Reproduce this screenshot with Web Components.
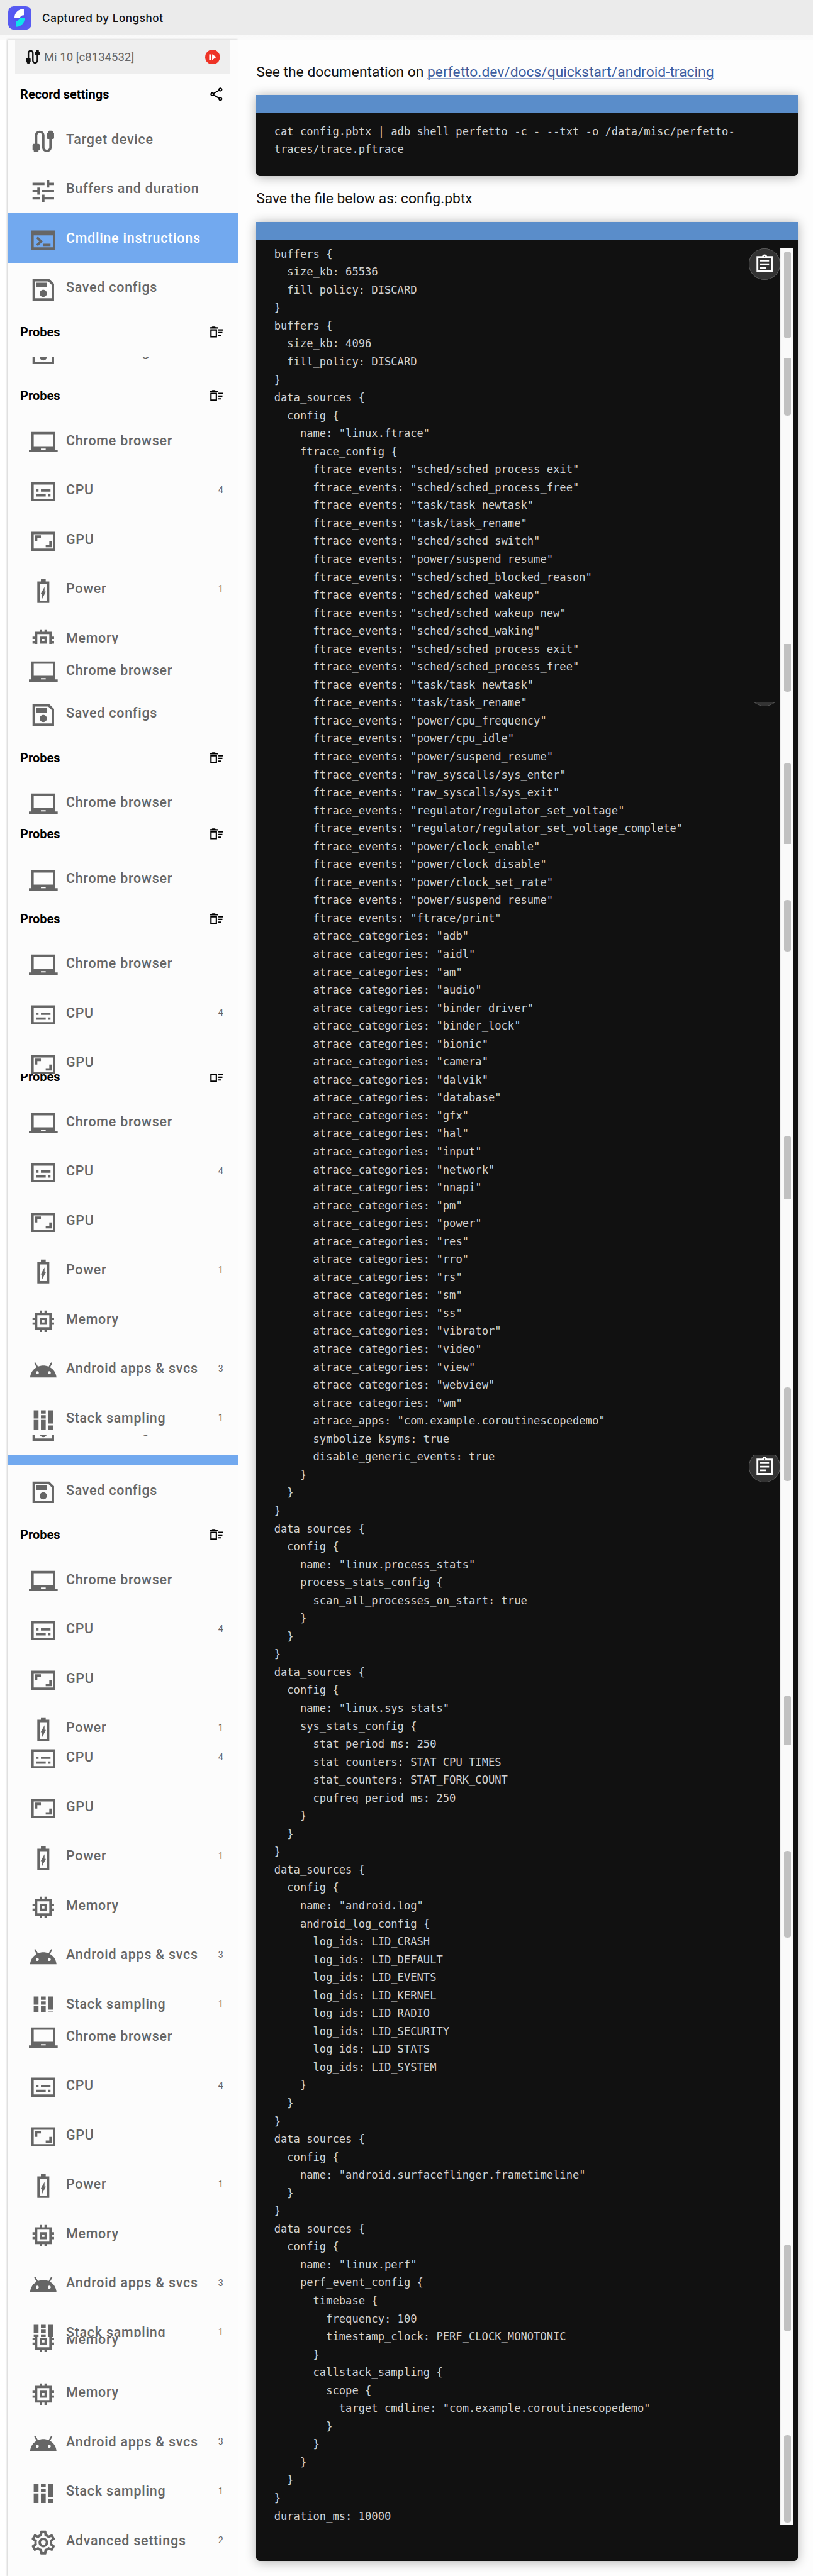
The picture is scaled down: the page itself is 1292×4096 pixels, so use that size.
<!doctype html>
<html><head><meta charset="utf-8">
<style>html,body{margin:0;padding:0;background:#fff;overflow:hidden}</style>
</head><body>
<shot-app></shot-app>
<script>
const P={
cable:'M20 5V4c0-.55-.45-1-1-1h-2c-.55 0-1 .45-1 1v1h-1v4c0 .55.45 1 1 1h1v7c0 1.1-.9 2-2 2s-2-.9-2-2V7c0-2.21-1.79-4-4-4S5 4.79 5 7v7H4c-.55 0-1 .45-1 1v4h1v1c0 .55.45 1 1 1h2c.55 0 1-.45 1-1v-1h1v-4c0-.55-.45-1-1-1H7V7c0-1.1.9-2 2-2s2 .9 2 2v10c0 2.21 1.79 4 4 4s4-1.79 4-4v-7h1c.55 0 1-.45 1-1V5h-1z',
tune:'M3 17v2h6v-2H3zM3 5v2h10V5H3zm10 16v-2h8v-2h-8v-2h-2v6h2zM7 9v2H3v2h4v2h2V9H7zm14 4v-2H11v2h10zm-6-4h2V7h4V5h-4V3h-2v6z',
terminal:'M22 4H2v16h20V4zm-2 14H4V8h16v10zm-2-1h-6v-2h6v2zM7.5 17l-1.41-1.41L8.67 13l-2.59-2.59L7.5 9l4 4-4 4z',
save:'M17 3H3v18h18V7l-4-4zm2 16H5V5h11.17L19 7.83V19zm-7-7c-1.66 0-3 1.34-3 3s1.34 3 3 3 3-1.34 3-3-1.34-3-3-3zM6 6h9v4H6V6z',
laptop:'M22 18V3H2v15H0v2h24v-2h-2zm-8 0h-4v-1h4v1zm6-3H4V5h16v10z',
subtitles:'M22 4H2v16h20V4zm-2 14H4V6h16v12zM6 10h2v2H6zm0 4h8v2H6zm10 0h2v2h-2zm-6-4h8v2h-8z',
aspect:'M19 12h-2v3h-3v2h5v-5zM7 9h3V7H5v5h2V9zM22 4H2v16h20V4zm-2 14H4V6h16v12z',
battery:'M17 4h-3V2h-4v2H7v18h10V4zm-2 16H9V6h6v14zM11 18.5v-4H9.8L13 8.5v4h1.2z',
memory:'M15 9H9v6h6V9zm-2 4h-2v-2h2v2zm8-2V9h-2V5h-4V3h-2v2h-2V3H9v2H5v4H3v2h2v2H3v2h2v4h4v2h2v-2h2v2h2v-2h4v-4h2v-2h-2v-2h2zm-4 6H7V7h10v10z',
android:'M17.6 9.48l1.84-3.18c.16-.31.04-.69-.26-.85-.29-.15-.65-.06-.83.22l-1.88 3.24c-2.86-1.21-6.08-1.21-8.94 0L5.65 5.67c-.19-.29-.58-.38-.87-.2-.28.18-.37.54-.22.83L6.4 9.48C3.3 11.25 1.28 14.44 1 18h22c-.28-3.56-2.3-6.75-5.4-8.52zM7 15.25c-.69 0-1.25-.56-1.25-1.25s.56-1.25 1.25-1.25 1.25.56 1.25 1.25-.56 1.25-1.25 1.25zm10 0c-.69 0-1.25-.56-1.25-1.25s.56-1.25 1.25-1.25 1.25.56 1.25 1.25-.56 1.25-1.25 1.25z',
stack:'M4 4h4v6.8H4zM4 12h4v8H4zM10 4h4v2.7h-4zM10 8h4v2.8h-4zM10 12h4v8h-4zM16 4h4v11h-4zM16 16.6h4V20h-4z',
gear:'M19.43 12.98c.04-.32.07-.64.07-.98 0-.34-.03-.66-.07-.98l2.11-1.65c.19-.15.24-.42.12-.64l-2-3.46c-.09-.16-.26-.25-.44-.25-.06 0-.12.01-.17.03l-2.49 1c-.52-.4-1.08-.73-1.69-.98l-.38-2.65C14.46 2.18 14.25 2 14 2h-4c-.25 0-.46.18-.49.42l-.38 2.65c-.61.25-1.17.59-1.69.98l-2.49-1c-.06-.02-.12-.03-.18-.03-.17 0-.34.09-.43.25l-2 3.46c-.13.22-.07.49.12.64l2.11 1.65c-.04.32-.07.65-.07.98 0 .33.03.66.07.98l-2.11 1.65c-.19.15-.24.42-.12.64l2 3.46c.09.16.26.25.44.25.06 0 .12-.01.17-.03l2.49-1c.52.4 1.08.73 1.69.98l.38 2.65c.03.24.24.42.49.42h4c.25 0 .46-.18.49-.42l.38-2.65c.61-.25 1.17-.59 1.69-.98l2.49 1c.06.02.12.03.18.03.17 0 .34-.09.43-.25l2-3.46c.12-.22.07-.49-.12-.64l-2.11-1.65zm-1.98-1.71c.04.31.05.52.05.73 0 .21-.02.43-.05.73l-.14 1.13.89.7 1.08.84-.7 1.21-1.27-.51-1.04-.42-.9.68c-.43.32-.84.56-1.25.73l-1.06.43-.16 1.13-.2 1.35h-1.4l-.19-1.35-.16-1.13-1.06-.43c-.43-.18-.83-.41-1.23-.71l-.91-.7-1.06.43-1.27.51-.7-1.21 1.08-.84.89-.7-.14-1.13c-.03-.31-.05-.54-.05-.74s.02-.43.05-.73l.14-1.13-.89-.7-1.08-.84.7-1.21 1.27.51 1.04.42.9-.68c.43-.32.84-.56 1.25-.73l1.06-.43.16-1.13.2-1.35h1.39l.19 1.35.16 1.13 1.06.43c.43.18.83.41 1.23.71l.91.7 1.06-.43 1.27-.51.7 1.21-1.07.85-.89.7.14 1.13zM12 8c-2.21 0-4 1.79-4 4s1.79 4 4 4 4-1.79 4-4-1.79-4-4-4zm0 6c-1.1 0-2-.9-2-2s.9-2 2-2 2 .9 2 2-.9 2-2 2z',
share:'M18 16.08c-.76 0-1.44.3-1.96.77L8.91 12.7c.05-.23.09-.46.09-.7s-.04-.47-.09-.7l7.05-4.11c.54.5 1.25.81 2.04.81 1.66 0 3-1.34 3-3s-1.34-3-3-3-3 1.34-3 3c0 .24.04.47.09.7L8.04 9.81C7.5 9.31 6.79 9 6 9c-1.66 0-3 1.34-3 3s1.34 3 3 3c.79 0 1.5-.31 2.04-.81l7.12 4.16c-.05.21-.08.43-.08.65 0 1.61 1.31 2.92 2.92 2.92s2.92-1.31 2.92-2.92-1.31-2.92-2.92-2.92zM18 4c.55 0 1 .45 1 1s-.45 1-1 1-1-.45-1-1 .45-1 1-1zM6 13c-.55 0-1-.45-1-1s.45-1 1-1 1 .45 1 1-.45 1-1 1zm12 7.02c-.55 0-1-.45-1-1s.45-1 1-1 1 .45 1 1-.45 1-1 1z',
sweep:'M15 16h4v2h-4zm0-8h7v2h-7zm0 4h6v2h-6zM3 20h10V8H3v12zM5 10h6v8H5v-8zM14 5h-3l-1-1H6L5 5H2v2h12z',
clip:'M7 15h7v2H7zm0-4h10v2H7zm0-4h10v2H7zm12-4h-4.18C14.4 1.84 13.3 1 12 1c-1.3 0-2.4.84-2.82 2H3v18h18V3h-2zm-7-.25c.41 0 .75.34.75.75s-.34.75-.75.75-.75-.34-.75-.75.34-.75.75-.75zM19 19H5V5h14v14z'
};
function def(name,css,html,extra){
  customElements.define(name,class extends HTMLElement{
    constructor(){super();this.attachShadow({mode:'open'});}
    connectedCallback(){
      if(!this.shadowRoot.firstChild)this.shadowRoot.innerHTML='<style>'+css+'</style>'+(typeof html==='function'?html(this):html);
      if(extra&&!this._d){this._d=1;extra(this)}
    }
  });
}
customElements.define('m-icon',class extends HTMLElement{
  connectedCallback(){
    if(this.shadowRoot)return;
    const s=this.attachShadow({mode:'open'});
    s.innerHTML='<style>:host{display:block;flex:none;width:var(--i,64px);height:var(--i,64px)}svg{display:block;width:100%;height:100%;fill:currentColor}</style><svg viewBox="0 0 24 24"><path fill-rule="evenodd" d="'+P[this.getAttribute('name')]+'"/></svg>';
  }
});
def('capture-bar',`:host{display:block;height:88px;background:linear-gradient(#f1f1f1,#fafafa);font-family:Inter,"Liberation Sans",sans-serif}
.b{height:79px;background:#ebebeb;display:flex;align-items:center;padding-left:18px;gap:24px}
svg{display:block;width:52px;height:52px;margin-top:1px}
span{font-size:24px;font-weight:500;color:#111;letter-spacing:.75px}`,
`<div class="b"><svg viewBox="0 0 52 52"><defs><radialGradient id="g" cx=".5" cy=".5" r=".7"><stop offset="0" stop-color="#4f52f0"/><stop offset="1" stop-color="#5a5ef2"/></radialGradient></defs><rect width="52" height="52" rx="12" fill="url(#g)"/><path fill="#fff" d="M35 6V20C30 20 27.500 22 26 26H14C14 14 23 6 35 6Z"/><path fill="#0fe3ec" d="M37 26C37 37 29 46 17 46V33C22 33 25 30 26 26Z"/></svg><span><slot></slot></span></div>`);
def('device-row',`:host{display:flex;align-items:center;height:78px;margin:0 16px;background:#eee;padding:0 23px 0 20px;color:#666;font-size:26px;font-family:Roboto,sans-serif}
m-icon{--i:40px;color:#111;margin-right:5px}span{flex:1}svg{display:block;width:33px;height:33px}`,
`<m-icon name="cable"></m-icon><span><slot></slot></span><svg viewBox="0 0 33 33"><ellipse cx="16.500" cy="16.500" rx="16.500" ry="16.500" fill="#ee3326"/><path fill="#fff" d="M9 10.500h4v12H9zM15.500 10l9.500 6.500-9.500 6.500z"/></svg>`);
def('nav-head',`:host{display:flex;align-items:center;height:89px;padding:0 30px 0 28px;font:700 28px Roboto,sans-serif;color:#000;justify-content:space-between;box-sizing:border-box}
m-icon{--i:36px}`,
h=>`<span><slot></slot></span><m-icon name="${h.getAttribute('icon')}"></m-icon>`);
def('nav-row',`:host{display:flex;align-items:center;height:110px;padding:0 32px 0 48px;box-sizing:border-box;color:#666;font:500 30px Roboto,sans-serif;letter-spacing:1.1px}
:host([active]){background:#72a9ef;color:#fff}
m-icon{margin-top:10px;margin-right:18px;color:#666}
.t{flex:1;white-space:nowrap}.n{font-size:20px;font-weight:400;letter-spacing:0}`,
h=>`<m-icon name="${h.getAttribute('icon')}"></m-icon><span class="t"><slot></slot></span><span class="n">${h.getAttribute('count')||''}</span>`);
def('nav-band',`:host{display:block;background:#72a9ef}`,'');
def('nav-slice',`:host{display:block;overflow:hidden;flex:none}.i{display:block}`,
h=>`<div class="i" style="margin-top:${h.getAttribute('shift')||0}px"><slot></slot></div>`);
def('side-nav',`:host{display:block;width:512px;flex:none;background:#fcfcfc;margin-left:17px;border-right:2px solid #eee;box-shadow:-2px 0 4px rgba(0,0,0,.22)}`,'<slot></slot>');
def('doc-text',`:host{display:block;font:400 32px/40px Roboto,sans-serif;color:#111;margin:31px 0}`,'<slot></slot>');
def('fake-scroll',`:host{display:block;flex:none;width:28px;border-left:2px solid #eee;background:#fafafa;position:relative}
.w{display:flex;flex-direction:column;padding-left:6px}
.t{width:16px;background:#c1c1c1;flex:none}`,
h=>{let y=554,o='';(h.getAttribute('thumbs')||'').split(' ').forEach(t=>{
   const [a,b,r]=t.split(',');const rad={b:'8px/4px',t:'8px 8px 0 0/4px 4px 0 0',e:'0 0 8px 8px/0 0 4px 4px',n:'0'}[r];
   o+=`<div class="t" style="margin-top:${a-y}px;height:${b-a}px;border-radius:${rad}"></div>`;y=+b;});
   return '<div class="w">'+o+'</div>';});
def('copy-btn',`:host{position:absolute;right:39px;width:71px;overflow:hidden;display:block;z-index:1}
.c{width:70px;height:70px;border-radius:50%;background:#333;box-shadow:inset 0 0 0 1px #666;display:flex;align-items:center;justify-content:center;color:#fff}
m-icon{--i:48px}`,
h=>`<div class="c" style="margin-top:${h.getAttribute('shift')||0}px"><m-icon name="clip"></m-icon></div>`);
def('code-block',`:host{display:block;position:relative;background:#111;border-radius:0 0 8px 8px;box-shadow:0 2px 24px rgba(0,0,0,.3)}
.h{height:40px;background:#5a8dca}
.m{display:flex;justify-content:space-between;align-items:flex-start}
.p{font:400 24px/40px "DejaVu Sans Mono","Liberation Mono",monospace;color:#d2d2d2;white-space:pre-wrap;padding:var(--pt,21px) 80px var(--pb,39px) 40px;flex:1;min-width:0}
::slotted([slot=bar]){margin:20px 10px 0 0}`,
`<div class="h"></div><div class="m"><div class="p"><slot></slot></div><slot name="bar"></slot></div><slot name="over"></slot>`);
def('main-pane',`:host{display:block;flex:1;min-width:0;padding:22px 33px 0 40px;background:#fdfdfd;height:5651px}`,'<slot></slot>');
def('shot-app',`:host{display:block;width:1810px;height:5738px;overflow:hidden;zoom:.71381;background:#fff}
.body{display:flex;align-items:stretch;height:5651px}`,
`<capture-bar>Captured by Longshot</capture-bar><div class="body"><side-nav id="n"></side-nav><main-pane id="m"></main-pane></div>`,
h=>{
  const R={chrome:['laptop','Chrome browser',''],cpu:['subtitles','CPU','4'],gpu:['aspect','GPU',''],power:['battery','Power','1'],mem:['memory','Memory',''],and:['android','Android apps &amp; svcs','3'],stk:['stack','Stack sampling','1'],adv:['gear','Advanced settings','2'],tgt:['cable','Target device',''],buf:['tune','Buffers and duration',''],cmd:['terminal','Cmdline instructions',''],sav:['save','Saved configs','']};
  const item=k=>{
    if(k==='probes')return '<nav-head icon="sweep">Probes</nav-head>';
    if(k==='rec')return '<nav-head icon="share">Record settings</nav-head>';
    if(k==='dev')return '<device-row>Mi 10 [c8134532]</device-row>';
    if(k==='band')return '<nav-band style="height:23px"></nav-band>';
    const r=R[k];return `<nav-row icon="${r[0]}"${r[2]?` count="${r[2]}"`:''}${k==='cmd'?' active':''}>${r[1]}</nav-row>`;};
  const S=[
   [88,795,0,'dev rec tgt buf cmd sav probes'],
   [795,1435,-68,'sav probes chrome cpu gpu power mem'],
   [1435,1530,3,'chrome'],
   [1530,1815,3,'sav probes chrome'],
   [1815,2000,-2,'probes chrome'],
   [2000,2391,2,'probes chrome cpu gpu'],
   [2391,3195,-37,'probes chrome cpu gpu power mem and stk'],
   [3195,3241,-69,'sav'],
   [3241,3881,0,'band sav probes chrome cpu gpu power'],
   [3881,4482,-22,'cpu gpu power mem and stk'],
   [4482,5206,-2,'chrome cpu gpu power mem and stk'],
   [5206,5270,-50,'mem'],
   [5270,5739,4,'mem and stk adv']
  ];
  h.shadowRoot.getElementById('n').innerHTML=S.map(s=>`<nav-slice shift="${s[2]}" style="height:${s[1]-s[0]}px">${s[3].split(' ').map(item).join('')}</nav-slice>`).join('');
  const f=l=>`      ftrace_events: "${l}"`, a=l=>`      atrace_categories: "${l}"`;
  const code=['buffers {','  size_kb: 65536','  fill_policy: DISCARD','}','buffers {','  size_kb: 4096','  fill_policy: DISCARD','}','data_sources {','  config {','    name: "linux.ftrace"','    ftrace_config {',
  ...'sched/sched_process_exit sched/sched_process_free task/task_newtask task/task_rename sched/sched_switch power/suspend_resume sched/sched_blocked_reason sched/sched_wakeup sched/sched_wakeup_new sched/sched_waking sched/sched_process_exit sched/sched_process_free task/task_newtask task/task_rename power/cpu_frequency power/cpu_idle power/suspend_resume raw_syscalls/sys_enter raw_syscalls/sys_exit regulator/regulator_set_voltage regulator/regulator_set_voltage_complete power/clock_enable power/clock_disable power/clock_set_rate power/suspend_resume ftrace/print'.split(' ').map(f),
  ...'adb aidl am audio binder_driver binder_lock bionic camera dalvik database gfx hal input network nnapi pm power res rro rs sm ss vibrator video view webview wm'.split(' ').map(a),
  '      atrace_apps: "com.example.coroutinescopedemo"','      symbolize_ksyms: true','      disable_generic_events: true','    }','  }','}',
  'data_sources {','  config {','    name: "linux.process_stats"','    process_stats_config {','      scan_all_processes_on_start: true','    }','  }','}',
  'data_sources {','  config {','    name: "linux.sys_stats"','    sys_stats_config {','      stat_period_ms: 250','      stat_counters: STAT_CPU_TIMES','      stat_counters: STAT_FORK_COUNT','      cpufreq_period_ms: 250','    }','  }','}',
  'data_sources {','  config {','    name: "android.log"','    android_log_config {',...'CRASH DEFAULT EVENTS KERNEL RADIO SECURITY STATS SYSTEM'.split(' ').map(x=>'      log_ids: LID_'+x),'    }','  }','}',
  'data_sources {','  config {','    name: "android.surfaceflinger.frametimeline"','  }','}',
  'data_sources {','  config {','    name: "linux.perf"','    perf_event_config {','      timebase {','        frequency: 100','        timestamp_clock: PERF_CLOCK_MONOTONIC','      }','      callstack_sampling {','        scope {','          target_cmdline: "com.example.coroutinescopedemo"','        }','      }','    }','  }','}','duration_ms: 10000'].join('\n');
  h.shadowRoot.getElementById('m').innerHTML=`
  <doc-text>See the documentation on <a href="#" style="color:#3d5c9f;text-decoration:underline;text-decoration-color:#95a6cd;text-decoration-thickness:2px;text-underline-offset:3px">perfetto.dev/docs/quickstart/android-tracing</a></doc-text>
  <code-block>cat config.pbtx | adb shell perfetto -c - --txt -o /data/misc/perfetto-traces/trace.pftrace</code-block>
  <doc-text>Save the file below as: config.pbtx</doc-text>
  <code-block style="--pt:12px;--pb:78px;height:5210px"><fake-scroll slot="bar" style="height:5071px" thumbs="561,754,b 798,926,e 1435,1541,e 1700,1880,t 2005,2120,b 2530,2670,t 3090,3300,b 3777,3888,t 4123,4317,b 5000,5193,b 5425,5619,b"></fake-scroll><copy-btn slot="over" style="top:59px;height:71px"></copy-btn><copy-btn slot="over" style="top:1071px;height:8px" shift="-62"></copy-btn><copy-btn slot="over" style="top:2747px;height:62px" shift="-9"></copy-btn>${code.replace(/&/g,'&amp;')}</code-block>`;
});
</script>
</body></html>
